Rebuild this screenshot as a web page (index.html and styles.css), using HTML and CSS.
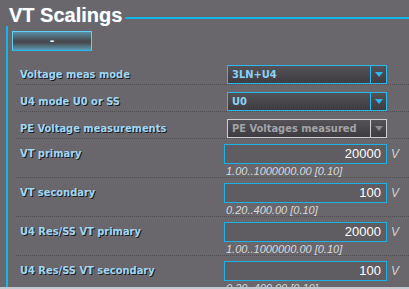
FILE: index.html
```html
<!DOCTYPE html>
<html>
<head>
<meta charset="utf-8">
<link rel="stylesheet" href="styles.css">
</head>
<body>
<div class="panel">
  <div class="header">
    <h1 class="title">VT Scalings</h1>
    <div class="rule"></div>
  </div>
  <div class="body">
    <button class="btn">-</button>
    <div class="rows">
      <div class="row sel-row">
        <div class="label">Voltage meas mode</div>
        <div class="select"><span class="sel-text">3LN+U4</span><span class="sel-arrow"></span></div>
      </div>
      <div class="row sel-row">
        <div class="label">U4 mode U0 or SS</div>
        <div class="select"><span class="sel-text">U0</span><span class="sel-arrow"></span></div>
      </div>
      <div class="row sel-row">
        <div class="label">PE Voltage measurements</div>
        <div class="select disabled"><span class="sel-text">PE Voltages measured</span><span class="sel-arrow"></span></div>
      </div>
      <div class="row in-row">
        <div class="label">VT primary</div>
        <div class="ctrl">
          <div class="in-line"><div class="input">20000</div><span class="unit">V</span></div>
          <div class="range">1.00..1000000.00 [0.10]</div>
        </div>
      </div>
      <div class="row in-row">
        <div class="label">VT secondary</div>
        <div class="ctrl">
          <div class="in-line"><div class="input">100</div><span class="unit">V</span></div>
          <div class="range">0.20..400.00 [0.10]</div>
        </div>
      </div>
      <div class="row in-row">
        <div class="label">U4 Res/SS VT primary</div>
        <div class="ctrl">
          <div class="in-line"><div class="input">20000</div><span class="unit">V</span></div>
          <div class="range">1.00..1000000.00 [0.10]</div>
        </div>
      </div>
      <div class="row in-row">
        <div class="label">U4 Res/SS VT secondary</div>
        <div class="ctrl">
          <div class="in-line"><div class="input">100</div><span class="unit">V</span></div>
          <div class="range">0.20..400.00 [0.10]</div>
        </div>
      </div>
    </div>
  </div>
</div>
<div class="strip"></div>
</body>
</html>
```

FILE: styles.css
```css
html, body {
  margin: 0;
  padding: 0;
  background: #69676c;
  overflow: hidden;
}
body {
  width: 409px;
  height: 289px;
  font-family: "DejaVu Sans Condensed", "DejaVu Sans", sans-serif;
}
.panel {
  height: 287px;
  overflow: hidden;
}
.header {
  display: flex;
  height: 26px;
}
.title {
  margin: 0;
  padding: 4px 0 0 9px;
  font: bold 20px/22px "Liberation Sans", Arial, sans-serif;
  color: #ffffff;
  text-shadow: 0 0 1px rgba(170, 220, 255, 0.6);
  white-space: nowrap;
}
.rule {
  flex: 1;
  height: 2px;
  margin-top: 17px;
  margin-left: 3px;
  background: #17b4e8;
}
.body {
  margin-left: 6px;
  border-left: 2px solid #17b4e8;
  padding-top: 5px;
  min-height: 300px;
}
.btn {
  display: block;
  margin: 0 0 0 4px;
  padding: 0;
  width: 80px;
  height: 20px;
  box-sizing: border-box;
  border: 1px solid #5fd0f5;
  border-bottom-color: #2ab8ee;
  background: linear-gradient(#5b8fa3, #48494e 50%, #4a4b50 60%, #5a9db5);
  color: #ffffff;
  font: bold 11px/18px "DejaVu Sans", sans-serif;
}
.rows {
  margin-top: 7px;
}
.row {
  display: flex;
  margin-left: 8px;
  padding-left: 4px;
  border-bottom: 1px dotted #4f4d52;
}
.label {
  flex: none;
  width: 204px;
  font-weight: bold;
  font-size: 11px;
  color: #9fd7f5;
  text-shadow: 1px 1px 0 #1c1c20;
  white-space: nowrap;
}
.sel-row {
  height: 26px;
}
.sel-row .label {
  padding-top: 7px;
  line-height: 19px;
}
.select {
  display: flex;
  margin-top: 7px;
  margin-left: 3px;
  width: 160px;
  height: 19px;
  box-sizing: border-box;
  border: 1px solid #2ab8ee;
  background: linear-gradient(#545257, #3e3c41);
}
.sel-text {
  flex: 1;
  padding-left: 4px;
  line-height: 17px;
  font-weight: bold;
  font-size: 11px;
  color: #8ad2f5;
  white-space: nowrap;
  overflow: hidden;
}
.sel-arrow {
  flex: none;
  width: 15px;
  border-left: 1px solid #2ab8ee;
  display: flex;
  align-items: center;
  justify-content: center;
}
.sel-arrow::after {
  content: "";
  border-top: 5px solid #2ab8ee;
  border-left: 4px solid transparent;
  border-right: 4px solid transparent;
}
.select.disabled {
  border-color: #cfcfd2;
}
.select.disabled .sel-text {
  color: #a3a3a6;
}
.select.disabled .sel-arrow {
  border-left-color: #cfcfd2;
}
.select.disabled .sel-arrow::after {
  border-top-color: #8c8b8f;
}
.in-row {
  height: 38px;
  padding-top: 5px;
  box-sizing: border-box;
  height: 39px;
}
.in-row .label {
  line-height: 20px;
}
.ctrl {
  display: flex;
  flex-direction: column;
}
.in-line {
  display: flex;
  align-items: center;
}
.input {
  width: 163px;
  height: 20px;
  box-sizing: border-box;
  border: 1px solid #1cb2e8;
  background: #5f5d62;
  text-align: right;
  padding-right: 5px;
  font: 13px/18px "Liberation Sans", Arial, sans-serif;
  color: #ffffff;
}
.unit {
  margin-left: 4px;
  font: italic 12px "Liberation Sans", Arial, sans-serif;
  color: #d0d0d2;
}
.range {
  margin-top: 1px;
  padding-left: 2px;
  font: italic 11px/12px "Liberation Sans", Arial, sans-serif;
  color: #dadadc;
  white-space: nowrap;
}
.strip {
  height: 2px;
  background: #c3cad2;
}
```
